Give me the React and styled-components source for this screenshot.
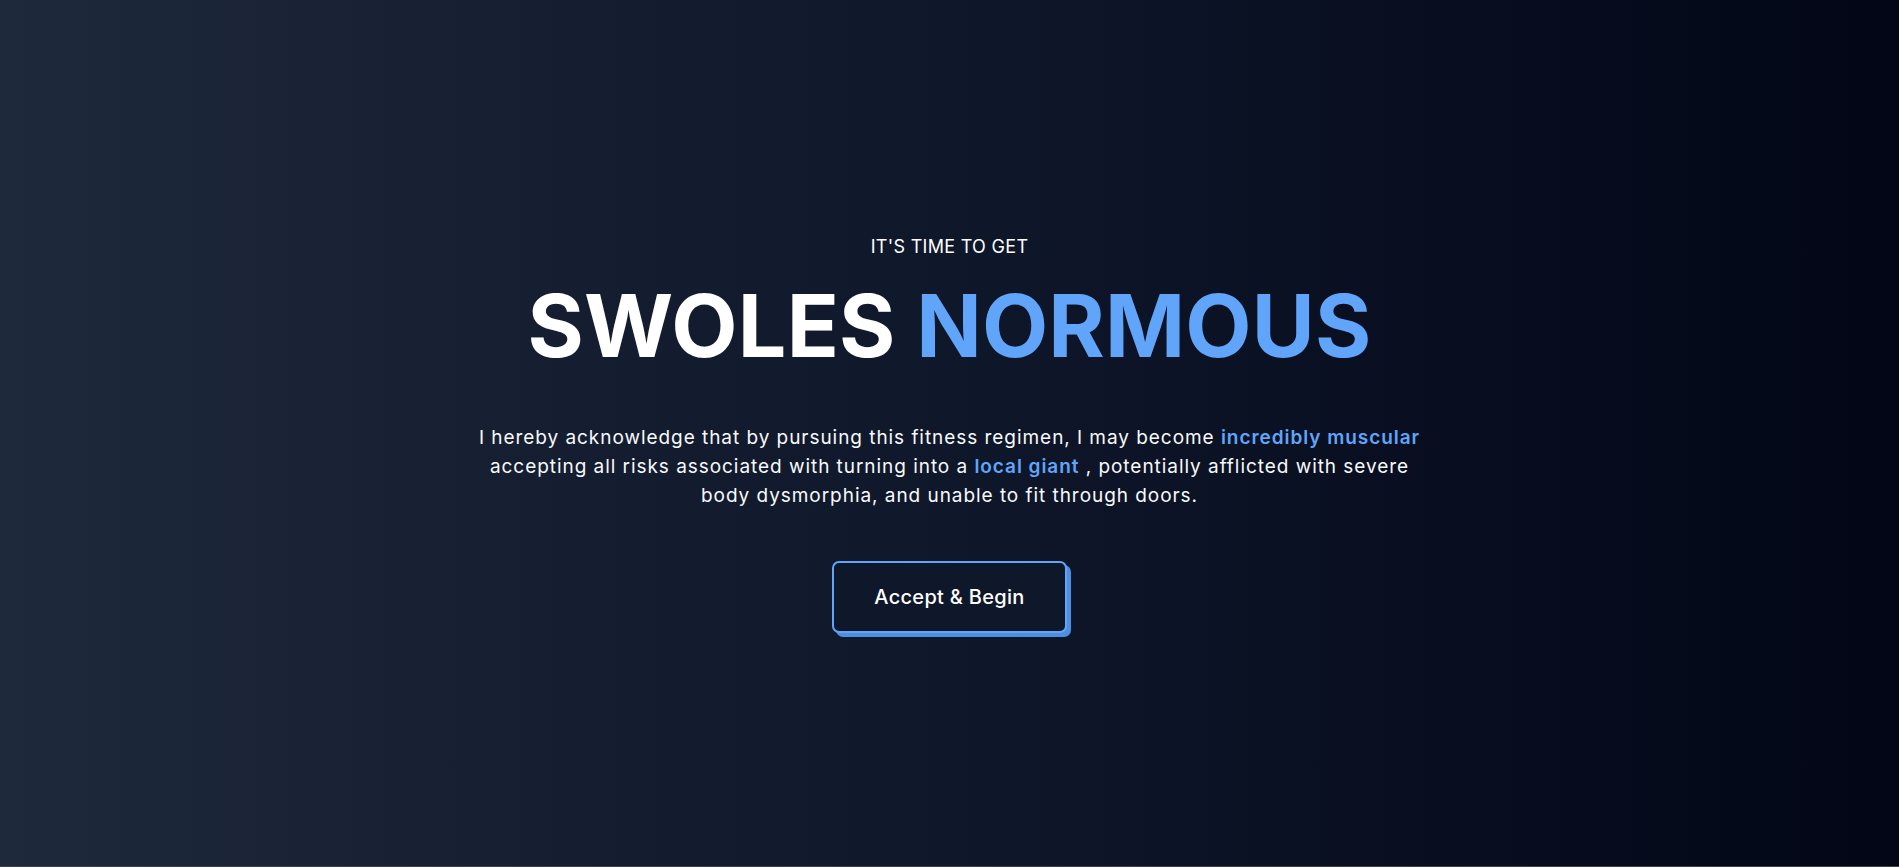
import React from "react";
import styled, { createGlobalStyle } from "styled-components";

const GlobalStyle = createGlobalStyle`
  html, body {
    margin: 0;
    padding: 0;
    background: #3f434a;
  }
  body {
    font-family: Inter, "Noto Sans", "Open Sans", sans-serif;
    -webkit-font-smoothing: antialiased;
  }
  * { box-sizing: border-box; }
`;

const Hero = styled.section`
  height: calc(100vh - 1px);
  display: flex;
  flex-direction: column;
  align-items: center;
  justify-content: center;
  text-align: center;
  color: #ffffff;
  background: linear-gradient(to right, #1e293b 0%, #0f172a 50%, #020617 100%);
`;

const Tagline = styled.p`
  margin: 0;
  font-size: 18px;
  line-height: 28px;
  font-weight: 400;
  text-transform: uppercase;
  letter-spacing: 0.3px;
  color: #ffffff;
`;

const Title = styled.h1`
  margin: 22px 0 0;
  font-size: 86px;
  line-height: 1;
  font-weight: 700;
  letter-spacing: 0.2px;
  color: #ffffff;
`;

const Accent = styled.span`
  color: #60a5fa;
`;

const Body = styled.p`
  margin: 54px 0 0;
  font-size: 19px;
  line-height: 29.25px;
  font-weight: 400;
  letter-spacing: 0.95px;
  color: #f8fafc;
`;

const Highlight = styled.span`
  color: #60a5fa;
  font-weight: 600;
`;

const CTA = styled.button`
  margin-top: 51px;
  padding: 20px 40px;
  font-family: inherit;
  font-size: 20px;
  line-height: 28px;
  font-weight: 500;
  letter-spacing: 0.3px;
  color: #ffffff;
  background: #0f172a;
  border: 2px solid #60a5fa;
  border-radius: 7px;
  box-shadow: 4px 4px 0 #4f8fe0;
  cursor: pointer;
`;

export default function App() {
  return (
    <>
      <GlobalStyle />
      <Hero>
        <Tagline>It's time to get</Tagline>
        <Title>
          SWOLES <Accent>NORMOUS</Accent>
        </Title>
        <Body>
          I hereby acknowledge that by pursuing this fitness regimen, I may become{" "}
          <Highlight>incredibly muscular</Highlight>
          <br />
          accepting all risks associated with turning into a{" "}
          <Highlight>local giant</Highlight> , potentially afflicted with severe
          <br />
          body dysmorphia, and unable to fit through doors.
        </Body>
        <CTA>Accept &amp; Begin</CTA>
      </Hero>
    </>
  );
}
